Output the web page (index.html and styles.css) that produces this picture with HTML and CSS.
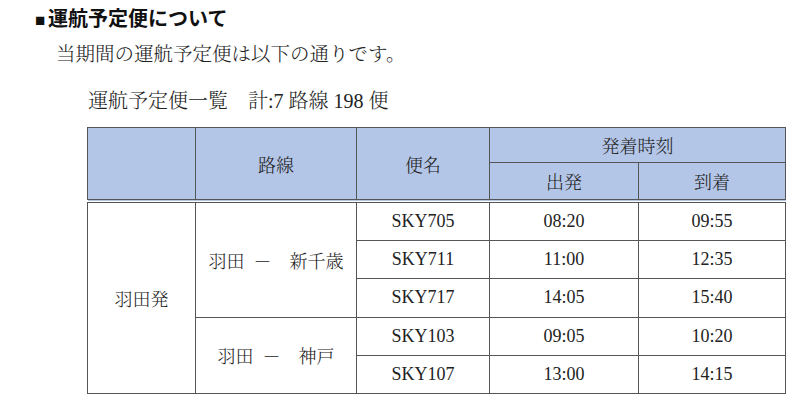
FILE: index.html
```html
<!DOCTYPE html>
<html lang="ja">
<head>
<meta charset="utf-8">
<link rel="stylesheet" href="styles.css">
</head>
<body>
<div class="page">
  <h1 class="title"><span class="sq">■</span>運航予定便について</h1>
  <p class="lead">当期間の運航予定便は以下の通りです。</p>
  <p class="caption">運航予定便一覧　計:7 路線 198 便</p>
  <table class="sched">
    <colgroup>
      <col class="c1"><col class="c2"><col class="c3"><col class="c4"><col class="c5">
    </colgroup>
    <thead>
      <tr class="h1">
        <th rowspan="2"></th>
        <th rowspan="2">路線</th>
        <th rowspan="2">便名</th>
        <th colspan="2">発着時刻</th>
      </tr>
      <tr class="h2">
        <th>出発</th>
        <th>到着</th>
      </tr>
    </thead>
    <tbody>
      <tr>
        <td rowspan="5">羽田発</td>
        <td rowspan="3">羽田&nbsp; －　新千歳</td>
        <td>SKY705</td><td>08:20</td><td>09:55</td>
      </tr>
      <tr><td>SKY711</td><td>11:00</td><td>12:35</td></tr>
      <tr><td>SKY717</td><td>14:05</td><td>15:40</td></tr>
      <tr>
        <td rowspan="2">羽田&nbsp; －　神戸</td>
        <td>SKY103</td><td>09:05</td><td>10:20</td>
      </tr>
      <tr><td>SKY107</td><td>13:00</td><td>14:15</td></tr>
    </tbody>
  </table>
</div>
</body>
</html>
```

FILE: styles.css
```css
html, body {
  margin: 0;
  padding: 0;
  background: #fff;
}
body {
  font-family: "Liberation Serif", "Noto Serif CJK JP", "Noto Sans CJK JP", serif;
  color: #222;
}
.page {
  padding: 5px 0 0 35px;
}
.title {
  margin: 0;
  font-family: "Noto Sans CJK JP", sans-serif;
  font-size: 20px;
  font-weight: bold;
  line-height: 25px;
  color: #111;
}
.sq {
  font-family: "Liberation Sans", sans-serif;
  font-size: 17px;
  font-weight: normal;
  display: inline-block;
  width: 13px;
}
.lead {
  margin: 9px 0 0 21px;
  font-size: 19.5px;
  line-height: 26px;
  font-weight: 300;
}
.caption {
  margin: 20px 0 0 53px;
  font-size: 20px;
  line-height: 26px;
  font-weight: 300;
}
.sched {
  margin: 13px 0 0 52px;
  border-collapse: collapse;
  width: 698px;
  table-layout: fixed;
  font-size: 18px;
}
.c1 { width: 108px; }
.c2 { width: 161px; }
.c3 { width: 133px; }
.c4 { width: 149px; }
.c5 { width: 147px; }
.sched th, .sched td {
  border: 1.5px solid #555;
  text-align: center;
  padding: 0;
  font-weight: 300;
  color: #222;
}
.sched th {
  background: #b4c6e7;
}
.h1 th { height: 34px; }
.h2 th { height: 36px; border-bottom: 4px double #555; }
.sched thead tr.h1 th[rowspan] { border-bottom: 4px double #555; }
.sched td { height: 37.2px; }
```
